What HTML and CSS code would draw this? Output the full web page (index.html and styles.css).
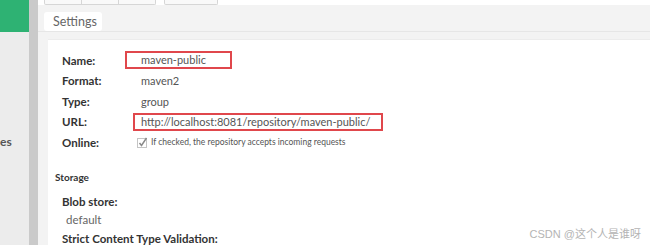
FILE: index.html
```html
<!DOCTYPE html>
<html lang="en">
<head>
    <meta charset="UTF-8">
    <title>Repository Settings</title>
    <link rel="stylesheet" href="styles.css">
</head>
<body>
    <div class="app">
        <aside class="sidebar">
            <div class="nav-item active"></div>
            <div class="nav-item label">es</div>
        </aside>
        <div class="splitter"></div>

        <main class="main">
            <div class="toolbar">
                <div class="tool-btn wide">
                    <span class="seg"></span><span class="seg"></span><span class="seg last"></span>
                </div>
                <div class="tool-btn"></div>
            </div>

            <div class="tabs">
                <div class="tab">Settings</div>
            </div>

            <div class="panel">
                <div class="row">
                    <div class="label">Name:</div>
                    <div class="value"><span class="mark name-mark">maven-public</span></div>
                </div>
                <div class="row">
                    <div class="label">Format:</div>
                    <div class="value">maven2</div>
                </div>
                <div class="row">
                    <div class="label">Type:</div>
                    <div class="value">group</div>
                </div>
                <div class="row">
                    <div class="label">URL:</div>
                    <div class="value"><span class="mark url-mark">http://localhost:8081/repository/maven-public/</span></div>
                </div>
                <div class="row">
                    <div class="label">Online:</div>
                    <div class="value check">
                        <svg class="checkbox" width="11" height="11" viewBox="0 0 11 11">
                            <rect x="0.5" y="1.5" width="9" height="9" fill="#fff" stroke="#c4c4c4"/>
                            <path d="M2.5 6 L4.5 8.5 L9.5 1" fill="none" stroke="#8a8a8a" stroke-width="1.5"/>
                        </svg>
                        <span class="hint">If checked, the repository accepts incoming requests</span>
                    </div>
                </div>

                <h4 class="section-title">Storage</h4>
                <div class="field first">
                    <div class="label">Blob store:</div>
                    <div class="value plain">default</div>
                </div>
                <div class="field">
                    <div class="label">Strict Content Type Validation:</div>
                </div>
            </div>
        </main>
    </div>

    <div class="watermark">CSDN @这个人是谁呀</div>
</body>
</html>
```

FILE: styles.css
```css
* {
    margin: 0;
    padding: 0;
    box-sizing: border-box;
}

body {
    width: 650px;
    height: 245px;
    overflow: hidden;
    position: relative;
    font-family: Lato, "Open Sans", "Liberation Sans", sans-serif;
    background: #fff;
}

.app {
    display: flex;
    height: 245px;
}

/* left navigation, mostly scrolled out of view */
.sidebar {
    width: 29px;
    background: #ececec;
    overflow: hidden;
}

.nav-item.active {
    height: 32px;
    background: #2eb273;
}

.nav-item.label {
    margin-top: 102px;
    font-size: 12px;
    line-height: 16px;
    color: #555;
}

.splitter {
    width: 9px;
    background: #cacaca;
}

.main {
    flex: 1;
    display: flex;
    flex-direction: column;
    background: #f3f3f3;
}

.toolbar {
    height: 8px;
    background: #fff;
    display: flex;
    gap: 8px;
    padding-left: 6px;
}

.tool-btn {
    width: 54px;
    height: 5px;
    border: 1px solid #d6d6d6;
    border-top: none;
    border-radius: 0 0 2px 2px;
    background: #f9f9f9;
    display: flex;
}

.tool-btn.wide {
    width: 112px;
}

.seg {
    flex: 1;
    border-right: 1px solid #d6d6d6;
}

.seg.last {
    border-right: none;
}

.tabs {
    padding: 5px 0 0 6px;
    height: 28px;
    border-bottom: 1px solid #e6e6e6;
}

.tab {
    display: inline-block;
    width: 58px;
    height: 19px;
    padding-left: 9px;
    line-height: 19px;
    background: #fff;
    border-radius: 3px;
    font-size: 12.5px;
    color: #666;
}

.panel {
    flex: 1;
    margin: 7px 0 0 10px;
    padding: 10px 0 0 7px;
    background: #fff;
    border-top: 1px solid #ececec;
}

.row {
    display: grid;
    grid-template-columns: 79px 1fr;
    align-items: center;
    height: 20.5px;
    padding-left: 7px;
}

.label {
    font-size: 11.5px;
    font-weight: bold;
    color: #333;
}

.value {
    font-size: 11px;
    color: #555;
}

/* red annotation frames from the screenshot */
.mark {
    display: inline-block;
    border: 2px solid #e0474c;
}

.name-mark {
    width: 107px;
    height: 18px;
    line-height: 14px;
    margin-left: -16px;
    padding-left: 14px;
}

.url-mark {
    width: 250px;
    height: 18px;
    line-height: 14px;
    margin-left: -8px;
    padding-left: 6px;
}

.check {
    display: flex;
    align-items: center;
    margin-left: -4px;
}

.checkbox {
    margin-right: 3px;
}

.hint {
    font-size: 8.5px;
    color: #555;
}

.section-title {
    margin-top: 18px;
    font-size: 10px;
    font-weight: bold;
    color: #333;
}

.field {
    padding-left: 7px;
}

.field.first {
    margin-top: 10px;
}

.field .label {
    line-height: 18px;
}

.field + .field {
    margin-top: 1px;
}

.value.plain {
    padding-left: 4px;
    line-height: 18px;
    font-size: 11.5px;
    color: #666;
}

.watermark {
    position: absolute;
    right: 9px;
    bottom: 4px;
    font-size: 11px;
    color: #b4b4b4;
    font-family: "Liberation Sans", "Noto Sans CJK SC", sans-serif;
}
```
